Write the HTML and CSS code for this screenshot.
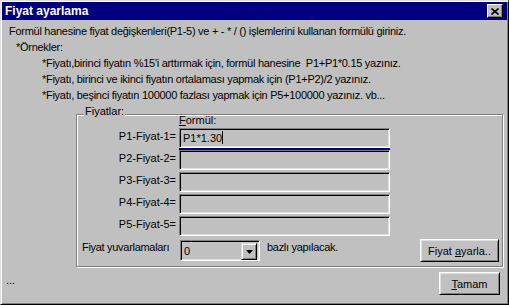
FILE: index.html
```html
<!DOCTYPE html>
<html lang="tr">
<head>
  <meta charset="UTF-8">
  <title>Fiyat ayarlama</title>
  <link rel="stylesheet" href="styles.css">
</head>
<body>

  <div class="window">
    <div class="titlebar">
      <span class="title">Fiyat ayarlama</span>
      <span class="close">
        <svg width="8" height="7" viewBox="0 0 8 7"><path d="M0.5 0.5 L7.5 6.5 M7.5 0.5 L0.5 6.5" stroke="#000" stroke-width="1.6" fill="none"/></svg>
      </span>
    </div>

    <div class="main">
      <p class="line">Formül hanesine fiyat değişkenleri(P1-5) ve + - * / () işlemlerini kullanan formülü giriniz.</p>
      <p class="line indent1">*Örnekler:</p>
      <p class="line indent2">*Fiyatı,birinci fiyatın %15'i arttırmak için, formül hanesine&nbsp; P1+P1*0.15 yazınız.</p>
      <p class="line indent2">*Fiyatı, birinci ve ikinci fiyatın ortalaması yapmak için (P1+P2)/2 yazınız.</p>
      <p class="line indent2">*Fiyatı, beşinci fiyatın 100000 fazlası yapmak için P5+100000 yazınız. vb...</p>

      <div class="group">
        <span class="group-title">Fiyatlar:</span>

        <div class="fields">
          <span></span>
          <span class="formul"><u>F</u>ormül:</span>

          <label>P1-Fiyat-1=</label>
          <div class="edit active">P1*1.30<span class="caret"></span></div>

          <label>P2-Fiyat-2=</label>
          <div class="edit"></div>

          <label>P3-Fiyat-3=</label>
          <div class="edit"></div>

          <label>P4-Fiyat-4=</label>
          <div class="edit"></div>

          <label>P5-Fiyat-5=</label>
          <div class="edit"></div>
        </div>

        <div class="round-row">
          <span class="round-label">Fiyat yuvarlamaları</span>
          <div class="combo">
            <span class="combo-value">0</span>
            <span class="drop">
              <svg width="7" height="4" viewBox="0 0 7 4"><path d="M0 0 H7 L3.5 4 Z" fill="#000"/></svg>
            </span>
          </div>
          <span class="round-text">bazlı yapılacak.</span>
          <button class="btn adjust">Fiyat <u>a</u>yarla..</button>
        </div>
      </div>
    </div>

    <div class="footer">
      <span class="dots">...</span>
      <button class="btn ok"><u>T</u>amam</button>
    </div>
  </div>

</body>
</html>
```

FILE: styles.css
```css
body {
  margin: 0;
  background: #c0c0c0;
  font-family: "Liberation Sans", Arial, sans-serif;
  font-size: 11px;
  color: #000;
}
.window {
  width: 509px;
  height: 305px;
  box-sizing: border-box;
  padding: 1px;
  border: 1px solid;
  border-color: #dfdfdf #000 #000 #dfdfdf;
  box-shadow: inset 1px 1px 0 #fff, inset -1px -1px 0 #808080;
  background: #c0c0c0;
}
.titlebar {
  height: 18px;
  background: #000080;
  display: flex;
  align-items: center;
  padding: 0 4px 0 3px;
}
.title {
  flex: 1;
  color: #fff;
  font-weight: bold;
  font-size: 12px;
}
.close {
  width: 16px;
  height: 14px;
  box-sizing: border-box;
  background: #c0c0c0;
  border: 1px solid;
  border-color: #fff #000 #000 #fff;
  box-shadow: inset -1px -1px 0 #808080;
  display: flex;
  align-items: center;
  justify-content: center;
}
.main {
  padding: 3px 0 0 7px;
}
.line {
  margin: 0;
  line-height: 16px;
  white-space: nowrap;
  letter-spacing: -0.28px;
}
.indent1 {
  padding-left: 7px;
}
.indent2 {
  padding-left: 33px;
}

/* group box */
.group {
  position: relative;
  margin: 11px 0 0 67px;
  width: 427px;
  box-sizing: border-box;
  border: 1px solid #808080;
  box-shadow: inset 1px 1px 0 #fff, 1px 1px 0 #fff;
  padding: 0 3px 4px 0;
}
.group-title {
  position: absolute;
  top: -10px;
  left: 7px;
  padding: 0 1px;
  line-height: 13px;
  background: #c0c0c0;
}
.fields {
  display: grid;
  grid-template-columns: 99px 211px;
  grid-template-rows: 11px repeat(5, 20px);
  column-gap: 3px;
  row-gap: 2px;
}
.formul {
  line-height: 10px;
}
.fields label {
  text-align: right;
  line-height: 16px;
}
.edit {
  box-sizing: border-box;
  height: 20px;
  border: 1px solid;
  border-color: #808080 #fff #fff #808080;
  box-shadow: inset 1px 1px 0 #000, inset -1px -1px 0 #dfdfdf;
  padding: 1px 0 0 3px;
  line-height: 16px;
}
.edit.active {
  box-shadow: inset 1px 1px 0 #000, inset -1px -1px 0 #dfdfdf, 0 2px 0 #000080;
}
.caret {
  display: inline-block;
  width: 1px;
  height: 13px;
  background: #000;
  vertical-align: -2px;
}

.round-row {
  display: flex;
  align-items: flex-start;
  margin-top: 3px;
  padding-left: 5px;
}
.round-row > span {
  line-height: 16px;
  letter-spacing: -0.3px;
}
.round-label {
  width: 98px;
}
.combo {
  width: 80px;
  height: 21px;
  margin: 1px 7px 0 0;
  box-sizing: border-box;
  border: 1px solid;
  border-color: #808080 #fff #fff #808080;
  box-shadow: inset 1px 1px 0 #000, inset -1px -1px 0 #dfdfdf;
  display: flex;
  padding: 2px 2px 2px 3px;
}
.combo-value {
  flex: 1;
  line-height: 16px;
}
.drop {
  width: 16px;
  height: 17px;
  box-sizing: border-box;
  border: 1px solid;
  border-color: #dfdfdf #000 #000 #dfdfdf;
  box-shadow: inset 1px 1px 0 #fff, inset -1px -1px 0 #808080;
  display: flex;
  align-items: center;
  justify-content: center;
}

.btn {
  font: inherit;
  color: #000;
  height: 23px;
  box-sizing: border-box;
  background: #c0c0c0;
  border: 1px solid;
  border-color: #fff #000 #000 #fff;
  box-shadow: inset 1px 1px 0 #dfdfdf, inset -1px -1px 0 #808080;
  padding: 0;
}
.adjust {
  width: 79px;
  margin-left: auto;
}
.footer {
  display: flex;
  justify-content: space-between;
  align-items: flex-start;
  margin-top: 5px;
  padding: 0 7px 0 4px;
}
.dots {
  line-height: 16px;
}
.ok {
  width: 61px;
}
```
